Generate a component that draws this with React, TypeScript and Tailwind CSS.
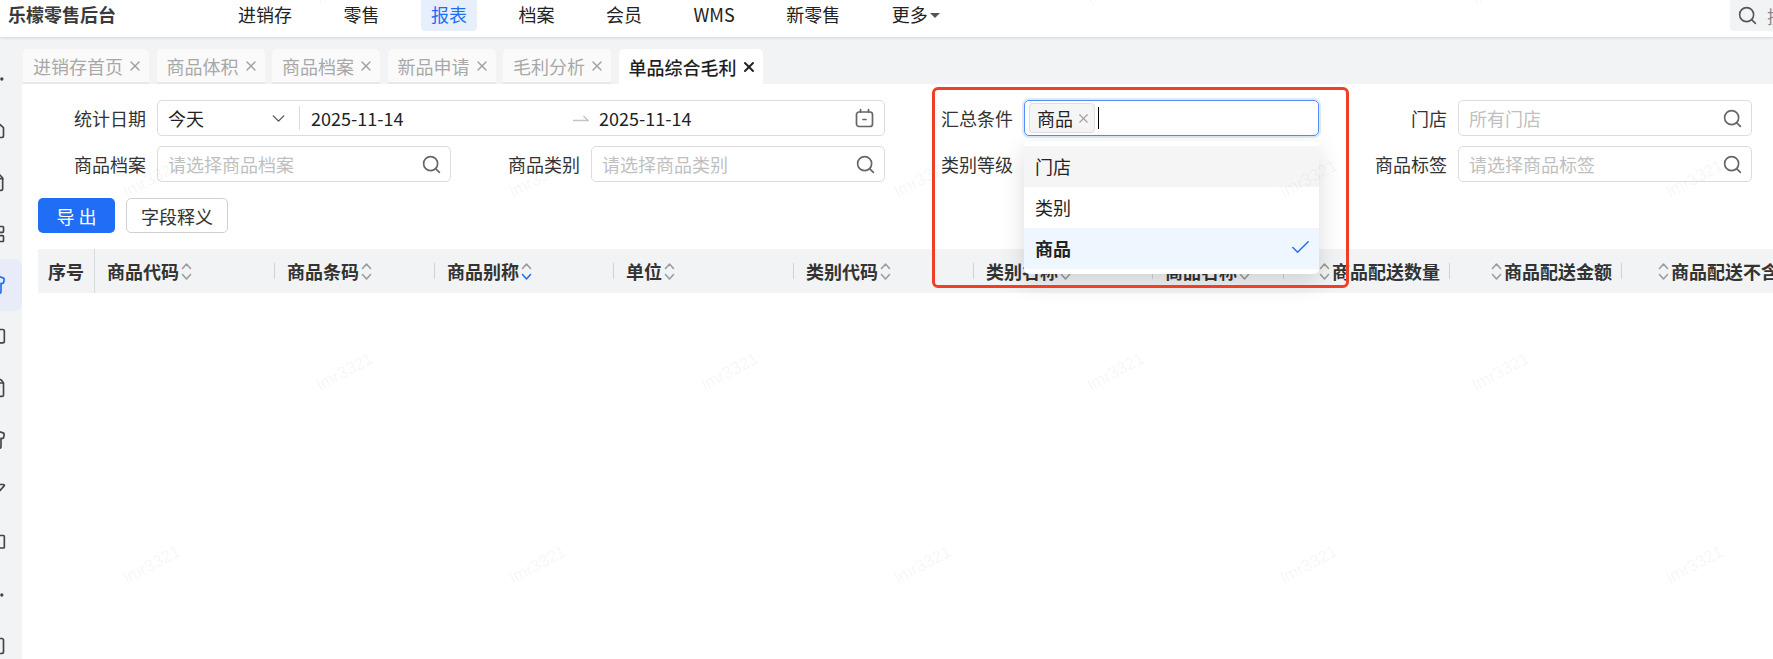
import { BookOpen, Check, ChevronDown, Ellipsis, FileText, Filter, Home, LayoutGrid, MessageSquare, Search, Shirt, ShoppingBag, Square, X } from 'lucide-react'

const navItems = ['进销存', '零售', '报表', '档案', '会员', 'WMS', '新零售']
const tabs = ['进销存首页', '商品体积', '商品档案', '新品申请', '毛利分析']
const sideIcons = [Ellipsis, Home, FileText, LayoutGrid, Shirt, MessageSquare, ShoppingBag, Shirt, Filter, BookOpen, Ellipsis, Square]

const marks: { x: number; y: number }[] = []
for (let k = 0; k < 6; k++) {
  marks.push({ x: -41 + 385.5 * k, y: -14 })
  marks.push({ x: 152 + 385.7 * k, y: 179 })
  marks.push({ x: -41 + 385.5 * k, y: 372 })
  marks.push({ x: 152 + 385.7 * k, y: 565 })
}

function SortIcon({ active }: { active?: boolean }) {
  return (
    <svg width="11" height="19" viewBox="0 0 11 19" fill="none" strokeWidth="1.6" strokeLinecap="round" strokeLinejoin="round" className="shrink-0">
      <path d="M1.5 6.5 5.5 2l4 4.5" stroke="#9c9c9c" />
      <path d="M1.5 12.5 5.5 17l4-4.500" stroke={active ? '#2a6ff0' : '#9c9c9c'} />
    </svg>
  )
}

function Col({ width, label, active, leading, last }: { width: string; label: string; active?: boolean; leading?: boolean; last?: boolean }) {
  return (
    <div className={`${width} relative flex h-full shrink-0 items-center ${leading ? 'justify-end pr-[10px]' : 'pl-[12px]'}`}>
      {leading && <span className="mr-[2px]"><SortIcon /></span>}
      <span className="whitespace-nowrap font-semibold text-[#333]">{label}</span>
      {!leading && <span className="ml-[2px]"><SortIcon active={active} /></span>}
      {!last && <span className="absolute right-0 top-[14px] h-[16px] w-px bg-[#d0d2d6]" />}
    </div>
  )
}

function SearchInput({ placeholder }: { placeholder: string }) {
  return (
    <div className="flex h-[36px] w-[294px] items-center rounded-[5px] border border-[#dcdcdc] bg-white pl-[10px] pr-[8px]">
      <span className="flex-1 text-[#bfbfbf]">{placeholder}</span>
      <Search size={21} strokeWidth={1.9} className="text-[#666]" />
    </div>
  )
}

function Field({ label, className, children }: { label: string; className?: string; children: React.ReactNode }) {
  return (
    <div className={`flex items-center justify-end gap-[11px] ${className ?? ''}`}>
      <span className="whitespace-nowrap text-[#333]">{label}</span>
      {children}
    </div>
  )
}

export default function App() {
  return (
    <div className="relative flex h-[659px] w-[1773px] flex-col overflow-hidden bg-[#f2f3f5] text-[18px] leading-[24px] text-[#222] [font-family:'Noto_Sans_CJK_SC','Liberation_Sans',sans-serif]">
      <header className="z-10 flex h-[37px] shrink-0 items-start bg-white pl-[8px] shadow-[0_1px_3px_rgba(0,0,0,0.12)]">
        <div className="mt-[2px] w-[108px] whitespace-nowrap font-bold text-[#3a3a3a]">乐檬零售后台</div>
        <nav className="ml-[112px] flex gap-[31.5px]">
          {navItems.map((item) => (
            <div
              key={item}
              className={`h-[31px] rounded-b-[4px] px-[10px] pt-[2px] ${item === '报表' ? 'bg-[#e8effc] text-[#1f6ef5]' : 'text-[#222]'}`}
            >
              {item}
            </div>
          ))}
          <div className="flex h-[31px] items-center px-[10px] pb-[3px]">
            更多
            <span className="ml-[2px] mt-[2px] h-0 w-0 border-x-[5px] border-t-[5px] border-x-transparent border-t-[#555]" />
          </div>
        </nav>
        <div className="ml-auto flex h-[31px] w-[43px] items-center overflow-hidden rounded-bl-[4px] bg-[#f2f3f5] pl-[7px]">
          <Search size={21} strokeWidth={1.8} className="shrink-0 text-[#555]" />
          <span className="ml-[9px] whitespace-nowrap text-[#888]">搜索</span>
        </div>
      </header>

      <div className="flex flex-1">
        <aside className="flex w-[22px] shrink-0 flex-col overflow-hidden pt-[16px]">
          {sideIcons.map((Icon, i) => (
            <div
              key={i}
              className={`flex h-[51.6px] w-[22px] shrink-0 items-center overflow-hidden rounded-r-[8px] ${i === 4 ? 'bg-[#e8ecf8] text-[#1f6ef5]' : 'text-[#444]'}`}
            >
              <Icon size={20} strokeWidth={2} className="ml-[-14px] shrink-0" />
            </div>
          ))}
        </aside>

        <div className="flex min-w-0 flex-1 flex-col">
          <div className="flex h-[47px] shrink-0 items-end gap-[7.5px] pl-[1px]">
            {tabs.map((tab) => (
              <div key={tab} className="flex h-[35px] items-center gap-[4px] rounded-t-[5px] border-b-2 border-[#e8e8e8] bg-[#fafafa] pl-[10px] pr-[6px] text-[#a8a8a8]">
                {tab}
                <X size={16} strokeWidth={2} className="text-[#a0a0a0]" />
              </div>
            ))}
            <div className="flex h-[35px] items-center gap-[4px] rounded-t-[5px] bg-white pl-[10px] pr-[6px] font-medium text-[#1f1f1f]">
              单品综合毛利
              <X size={16} strokeWidth={3} className="text-[#222]" />
            </div>
          </div>

          <main className="flex-1 bg-white">
            <div className="mt-[16px] grid grid-cols-[429px_434px_434px_434px] gap-y-[10px]">
              <Field label="统计日期" className="col-span-2">
                <div className="flex h-[36px] w-[728px] items-center rounded-[5px] border border-[#dcdcdc]">
                  <div className="flex w-[142px] items-center justify-between border-r border-[#dcdcdc] pl-[10px] pr-[10px]">
                    今天
                    <ChevronDown size={21} strokeWidth={1.6} className="text-[#555]" />
                  </div>
                  <span className="ml-[11px] w-[262px]">2025-11-14</span>
                  <svg width="16" height="8" viewBox="0 0 16 8" fill="none" stroke="#c4c4c4" strokeWidth="1.3">
                    <path d="M0 6.500h15L10.500 2" />
                  </svg>
                  <span className="ml-[10px] flex-1">2025-11-14</span>
                  <svg width="19" height="20" viewBox="0 0 19 20" fill="none" stroke="#666" strokeWidth="1.7" strokeLinecap="round" className="mr-[10px]">
                    <rect x="1.500" y="4" width="16" height="14.500" rx="2.500" />
                    <path d="M5.500 1.500V4M13.500 1.500V4M8 11.500h3" />
                  </svg>
                </div>
              </Field>
              <Field label="汇总条件" className="relative">
                <div className="flex h-[36px] w-[295px] items-center gap-[3px] rounded-[5px] border border-[#4f8ef7] pl-[4px] shadow-[0_0_0_2px_rgba(31,110,245,0.15)]">
                  <div className="flex h-[30px] w-[66px] items-center gap-[3px] rounded-[4px] border border-[#e0e0e0] bg-[#f5f5f5] pl-[7px]">
                    商品
                    <X size={15} strokeWidth={1.8} className="text-[#a0a0a0]" />
                  </div>
                  <span className="h-[22px] w-px bg-black" />
                </div>
                <ul className="absolute left-[139px] top-[41px] z-20 w-[295px] rounded-[5px] bg-white py-[5px] shadow-[0_8px_24px_rgba(0,0,0,0.14)]">
                  <li className="flex h-[41px] items-center bg-[#f5f5f5] px-[11px] pb-[2px]">门店</li>
                  <li className="flex h-[41px] items-center px-[11px] pb-[2px]">类别</li>
                  <li className="flex h-[41px] items-center justify-between bg-[#eef6ff] pb-[2px] pl-[11px] pr-[7px] font-bold">
                    商品
                    <Check size={23} strokeWidth={1.6} className="text-[#2a6ff0]" />
                  </li>
                </ul>
              </Field>
              <Field label="门店" className="pr-[1px]">
                <SearchInput placeholder="所有门店" />
              </Field>
              <Field label="商品档案">
                <SearchInput placeholder="请选择商品档案" />
              </Field>
              <Field label="商品类别">
                <SearchInput placeholder="请选择商品类别" />
              </Field>
              <Field label="类别等级">
                <div className="h-[36px] w-[295px] rounded-[5px] border border-[#dcdcdc]" />
              </Field>
              <Field label="商品标签" className="pr-[1px]">
                <SearchInput placeholder="请选择商品标签" />
              </Field>
            </div>

            <div className="mt-[16px] flex gap-[11px] pl-[16px]">
              <button className="h-[35px] w-[77px] rounded-[5px] bg-[#1f6ef5] text-white">导 出</button>
              <button className="h-[35px] w-[102px] rounded-[5px] border border-[#d0d0d0] bg-white text-[#333]">字段释义</button>
            </div>

            <div className="ml-[16px] mt-[16px] flex h-[44px] overflow-hidden bg-[#f2f3f5]">
              <div className="flex h-full w-[57px] shrink-0 items-center justify-center border-r border-[#d9dbdf] font-semibold text-[#333]">序号</div>
              <Col width="w-[180px]" label="商品代码" />
              <Col width="w-[160px]" label="商品条码" />
              <Col width="w-[179px]" label="商品别称" active />
              <Col width="w-[180px]" label="单位" />
              <Col width="w-[180px]" label="类别代码" />
              <Col width="w-[179px]" label="类别名称" />
              <Col width="w-[131px]" label="商品名称" />
              <Col width="w-[166px]" label="商品配送数量" leading />
              <Col width="w-[172px]" label="商品配送金额" leading />
              <div className="flex h-full items-center pl-[36px]">
                <span className="mr-[2px]"><SortIcon /></span>
                <span className="whitespace-nowrap font-semibold text-[#333]">商品配送不含</span>
              </div>
            </div>
          </main>
        </div>
      </div>

      {/* 水印 */}
      <div className="pointer-events-none absolute inset-0 z-30 overflow-hidden">
        {marks.map((m) => (
          <span
            key={`${m.x}-${m.y}`}
            className="absolute -translate-x-1/2 -translate-y-1/2 -rotate-[28deg] whitespace-nowrap text-[17px] text-[#000]/[0.05] [font-family:'Liberation_Sans',sans-serif]"
            style={{ left: m.x, top: m.y }}
          >
            lmr3321
          </span>
        ))}
      </div>

      {/* 红框标注 */}
      <div className="pointer-events-none absolute left-[932px] top-[87px] z-30 h-[201px] w-[417px] rounded-[6px] border-[3px] border-[#ee4026]" />
    </div>
  )
}
